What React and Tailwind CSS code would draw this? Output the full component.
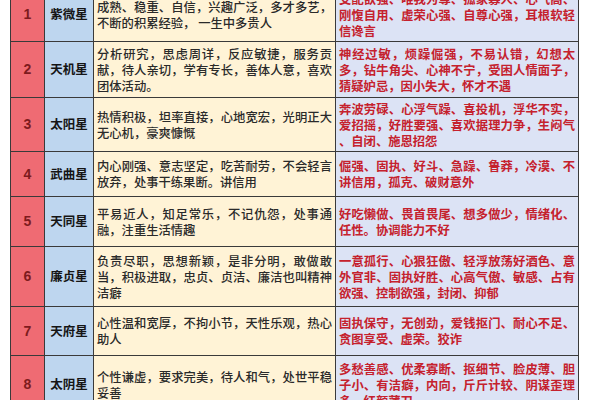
import React from 'react';

const rows = [
  {
    no: '1',
    name: '紫微星',
    h: 'h-[54px]',
    good: ['成熟、稳重、自信，兴趣广泛，多才多艺，', '不断的积累经验， 一生中多贵人'],
    bad: ['支配欲强、唯我为尊、孤家寡人、心气高、', '刚愎自用、虚荣心强、自尊心强，耳根软轻', '信谗言'],
  },
  {
    no: '2',
    name: '天机星',
    h: 'h-[56px]',
    good: ['分析研究，思虑周详，反应敏捷，服务贡', '献，待人亲切，学有专长，善体人意，喜欢', '团体活动。'],
    bad: ['神经过敏，烦躁倔强，不易认错，幻想太', '多，钻牛角尖、心神不宁，受困人情面子，', '猜疑妒忌，因小失大，怀才不遇'],
  },
  {
    no: '3',
    name: '太阳星',
    h: 'h-[54px]',
    good: ['热情积极，坦率直接，心地宽宏，光明正大', '无心机，豪爽慷慨'],
    bad: ['奔波劳碌、心浮气躁、喜投机，浮华不实，', '爱招摇，好胜要强、喜欢据理力争，生闷气', '、自闭、施恩招怨'],
  },
  {
    no: '4',
    name: '武曲星',
    h: 'h-[45px]',
    good: ['内心刚强、意志坚定，吃苦耐劳，不会轻言', '放弃，处事干练果断。讲信用'],
    bad: ['倔强、固执、好斗、急躁、鲁莽，冷漠、不', '讲信用，孤克、破财意外'],
  },
  {
    no: '5',
    name: '天同星',
    h: 'h-[50px]',
    good: ['平易近人，知足常乐，不记仇怨，处事通', '融，注重生活情趣'],
    bad: ['好吃懒做、畏首畏尾、想多做少，情绪化、', '任性。协调能力不好'],
  },
  {
    no: '6',
    name: '廉贞星',
    h: 'h-[60px]',
    good: ['负责尽职，思想新颖，是非分明，敢做敢', '当，积极进取，忠贞、贞洁、廉洁也叫精神', '洁癖'],
    bad: ['一意孤行、心狠狂傲、轻浮放荡好酒色、意', '外官非、固执好胜、心高气傲、敏感、占有', '欲强、控制欲强，封闭、抑郁'],
  },
  {
    no: '7',
    name: '天府星',
    h: 'h-[49px]',
    good: ['心性温和宽厚，不拘小节，天性乐观，热心', '助人'],
    bad: ['固执保守，无创劲，爱钱抠门、耐心不足、', '贪图享受、虚荣。狡诈'],
  },
  {
    no: '8',
    name: '太阴星',
    h: 'h-[58px]',
    good: ['个性谦虚，要求完美，待人和气，处世平稳', '妥善'],
    bad: ['多愁善感、优柔寡断、抠细节、脸皮薄、胆', '子小、有洁癖，内向，斤斤计较、阴谋歪理', '多、红颜薄刀'],
  },
];

const Lines = ({ lines }) => (
  <div className="w-full">
    {lines.map((line, i) => (
      <div
        key={i}
        className={i < lines.length - 1 ? 'text-justify [text-align-last:justify]' : 'text-left'}
      >
        {line}
      </div>
    ))}
  </div>
);

const App = () => {
  return (
    <div className="w-[600px] h-[400px] overflow-hidden bg-white font-['Noto_Sans_CJK_SC',sans-serif]">
      <div className="ml-[10px] mt-[-12px] w-[568px] border-l-[1.5px] border-[#3a3a3a]">
        {rows.map((r) => (
          <div key={r.no} className={`flex ${r.h}`}>
            <div className="w-[34px] shrink-0 flex items-center justify-center bg-[#ef6b73] border-r-[1.5px] border-b-[1.5px] border-[#3a3a3a] font-['Liberation_Sans',sans-serif] font-bold text-[14px] text-[#7e1b1e]">
              {r.no}
            </div>
            <div className="w-[49px] shrink-0 flex items-center justify-center bg-[#bed6ef] border-r-[1.5px] border-b-[1.5px] border-[#3a3a3a] font-bold text-[12.5px] text-[#151515]">
              {r.name}
            </div>
            <div className="w-[242px] shrink-0 flex items-center px-[3px] bg-[#fff3d6] border-r-[1.5px] border-b-[1.5px] border-[#3a3a3a] font-medium text-[12.3px] leading-[16px] text-[#2a2a2a]">
              <Lines lines={r.good} />
            </div>
            <div className="w-[243px] shrink-0 flex items-center px-[3px] bg-[#dce3f5] border-r-[1.5px] border-b-[1.5px] border-[#3a3a3a] font-semibold text-[12.3px] leading-[16px] text-[#c5212d]">
              <Lines lines={r.bad} />
            </div>
          </div>
        ))}
      </div>
    </div>
  );
};

export default App;
